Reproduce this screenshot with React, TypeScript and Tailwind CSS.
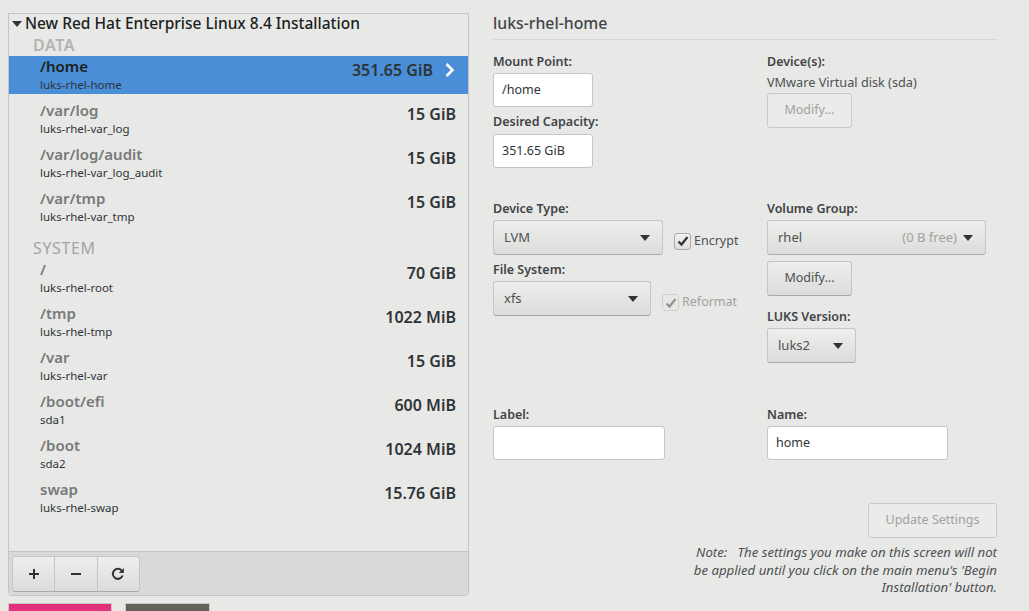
import React from 'react';

const font = "font-['Noto_Sans','Open_Sans',sans-serif]";

type Mount = { path: string; device: string; size: string; selected?: boolean };

const dataMounts: Mount[] = [
  { path: '/home', device: 'luks-rhel-home', size: '351.65 GiB', selected: true },
  { path: '/var/log', device: 'luks-rhel-var_log', size: '15 GiB' },
  { path: '/var/log/audit', device: 'luks-rhel-var_log_audit', size: '15 GiB' },
  { path: '/var/tmp', device: 'luks-rhel-var_tmp', size: '15 GiB' },
];

const systemMounts: Mount[] = [
  { path: '/', device: 'luks-rhel-root', size: '70 GiB' },
  { path: '/tmp', device: 'luks-rhel-tmp', size: '1022 MiB' },
  { path: '/var', device: 'luks-rhel-var', size: '15 GiB' },
  { path: '/boot/efi', device: 'sda1', size: '600 MiB' },
  { path: '/boot', device: 'sda2', size: '1024 MiB' },
  { path: 'swap', device: 'luks-rhel-swap', size: '15.76 GiB' },
];

const MountRow = ({ mount }: { mount: Mount }) => (
  <div className={`flex h-[38px] mb-[6px] pl-[31px] pr-[12px] justify-between ${mount.selected ? 'bg-[#4a8ed8]' : ''}`}>
    <div className="flex flex-col">
      <span className={`text-[15px] leading-[20px] font-semibold ${mount.selected ? 'text-[#1b1f20]' : 'text-[#777a78]'}`}>{mount.path}</span>
      <span className="text-[11.5px] leading-[16px] mt-[1px] text-[#2e3436]">{mount.device}</span>
    </div>
    <div className="flex items-start pt-[3px] gap-[11px]">
      <span className="text-[16px] leading-[22px] font-semibold text-[#2e3436]">{mount.size}</span>
      {mount.selected && (
        <svg width="12" height="22" viewBox="0 0 12 22" fill="none" stroke="white" strokeWidth="2.6">
          <path d="M2.5 5l6 6-6 6" />
        </svg>
      )}
    </div>
  </div>
);

const Caret = ({ color = '#2e3436' }: { color?: string }) => (
  <svg width="10" height="6" viewBox="0 0 10 6" fill={color} className="shrink-0">
    <path d="M0 0h10L5 6z" />
  </svg>
);

const FieldLabel = ({ children }: { children: React.ReactNode }) => (
  <div className="text-[12.5px] leading-[18px] font-semibold text-[#3f4546]">{children}</div>
);

const TextBox = ({ value, width }: { value: string; width: string }) => (
  <div className={`${width} h-[34px] bg-white border border-[#c4c6c4] rounded-[3px] flex items-center pl-[8px] text-[12.5px] text-[#2e3436]`}>{value}</div>
);

const gradientBtn = 'bg-gradient-to-b from-[#eeeeec] to-[#dcdcda] border border-[#c4c6c4] border-b-[#a9aba9] rounded-[3px]';

const Combo = ({ width, children }: { width: string; children: React.ReactNode }) => (
  <div className={`${width} h-[35px] ${gradientBtn} flex items-center pl-[10px] pr-[12px] justify-between text-[13px] text-[#4c5152] shrink-0`}>
    {children}
  </div>
);

const Check = ({ disabled }: { disabled?: boolean }) => (
  <div className={`w-[17px] h-[17px] rounded-[3px] border flex items-center justify-center shrink-0 ${disabled ? 'border-[#cfd0ce] bg-[#e8e8e7]' : 'border-[#a9aba9] bg-gradient-to-b from-[#f2f2f0] to-[#dededc]'}`}>
    <svg width="12" height="12" viewBox="0 0 12 12" fill="none" stroke={disabled ? '#8f9290' : '#2e3436'} strokeWidth="2.2">
      <path d="M1.5 6.5l3 3 6-7.5" />
    </svg>
  </div>
);

export default function App() {
  return (
    <div className={`${font} w-[1029px] h-[611px] overflow-hidden bg-[#e8e8e7] flex pl-[8px] pt-[13px]`}>
      {/* Left: mount list */}
      <div className="w-[461px] shrink-0 flex flex-col">
        <div className="h-[583px] shrink-0 border border-[#c4c6c4] rounded-b-[4px] flex flex-col">
          <div className="flex-1 flex flex-col">
            <div className="flex items-center h-[20px] pl-[3px] gap-[3px] text-[15.5px] font-medium text-[#1b1f20]">
              <Caret />
              <span>New Red Hat Enterprise Linux 8.4 Installation</span>
            </div>
            <div className="pl-[24px] h-[22px] text-[16px] leading-[22px] tracking-[0.6px] font-semibold text-[#b2b4b2]">DATA</div>
            {dataMounts.map(m => <MountRow key={m.path} mount={m} />)}
            <div className="pl-[24px] h-[19px] mt-[6px] text-[16px] leading-[20px] tracking-[0.6px] text-[#a3a5a3]">SYSTEM</div>
            <div className="mt-[2px]">
              {systemMounts.map(m => <MountRow key={m.path} mount={m} />)}
            </div>
          </div>
          <div className="h-[44px] border-t border-[#c4c6c4] bg-[#d9d9d8] rounded-b-[4px] flex items-center pl-[3px]">
            <div className={`flex h-[36px] w-[128px] ${gradientBtn} text-[#2e3436]`}>
              <div className="flex-1 flex items-center justify-center border-r border-[#c4c6c4]">
                <svg width="12" height="12" viewBox="0 0 12 12" stroke="#2e3436" strokeWidth="2"><path d="M6 1v10M1 6h10" /></svg>
              </div>
              <div className="flex-1 flex items-center justify-center border-r border-[#c4c6c4]">
                <svg width="12" height="12" viewBox="0 0 12 12" stroke="#2e3436" strokeWidth="2"><path d="M1 6h10" /></svg>
              </div>
              <div className="flex-1 flex items-center justify-center">
                <svg width="14" height="14" viewBox="0 0 14 14" fill="none" stroke="#2e3436" strokeWidth="2">
                  <path d="M11.6 8.5A5 5 0 1 1 10.5 3.4L12 5" />
                  <path d="M12.8 1v5h-5z" fill="#2e3436" stroke="none" />
                </svg>
              </div>
            </div>
          </div>
        </div>
        <div className="flex mt-[7px] gap-[13px] shrink-0">
          <div className="w-[104px] h-[20px] bg-[#e0317a] border border-[#c9c9c7]" />
          <div className="w-[85px] h-[20px] bg-[#63635b] border border-[#c9c9c7]" />
        </div>
      </div>

      {/* Right: details */}
      <div className="ml-[24px] w-[504px] flex flex-col">
        <div className="h-[27px] shrink-0 border-b border-[#d6d6d4] text-[15.8px] leading-[20px] font-medium text-[#3f4546]">luks-rhel-home</div>

        <div className="grid grid-cols-[274px_1fr] mt-[13px]">
          <div>
            <FieldLabel>Mount Point:</FieldLabel>
            <div className="mt-[2px]"><TextBox value="/home" width="w-[100px]" /></div>
            <div className="mt-[6px]"><FieldLabel>Desired Capacity:</FieldLabel></div>
            <div className="mt-[3px]"><TextBox value="351.65 GiB" width="w-[100px]" /></div>
          </div>
          <div>
            <FieldLabel>Device(s):</FieldLabel>
            <div className="text-[12.7px] leading-[18px] mt-[2px] text-[#4c5152]">VMware Virtual disk (sda)</div>
            <div className="mt-[2px] w-[85px] h-[35px] border border-[#c9cac8] rounded-[3px] bg-[#ebebea] flex items-center justify-center text-[12.5px] text-[#a0a2a0]">Modify...</div>
          </div>
        </div>

        <div className="grid grid-cols-[274px_1fr] mt-[32px]">
          <div>
            <FieldLabel>Device Type:</FieldLabel>
            <div className="flex items-center mt-[2px]">
              <Combo width="w-[170px]"><span>LVM</span><Caret /></Combo>
              <div className="flex items-center ml-[11px] gap-[3px] mt-[7px] text-[12.5px] text-[#4c5152]"><Check /><span>Encrypt</span></div>
            </div>
            <div className="mt-[6px]"><FieldLabel>File System:</FieldLabel></div>
            <div className="flex items-center mt-[2px]">
              <Combo width="w-[158px]"><span>xfs</span><Caret /></Combo>
              <div className="flex items-center ml-[11px] gap-[3px] mt-[8px] text-[12.5px] text-[#a0a2a0]"><Check disabled /><span>Reformat</span></div>
            </div>
          </div>
          <div>
            <FieldLabel>Volume Group:</FieldLabel>
            <div className="mt-[2px]">
              <Combo width="w-[219px]">
                <span>rhel</span>
                <span className="flex items-center gap-[6px]"><span className="text-[#a0a2a0]">(0 B free)</span><Caret /></span>
              </Combo>
            </div>
            <div className={`mt-[6px] w-[85px] h-[35px] ${gradientBtn} flex items-center justify-center text-[12.5px] text-[#4c5152]`}>Modify...</div>
            <div className="mt-[12px]"><FieldLabel>LUKS Version:</FieldLabel></div>
            <div className="mt-[2px]"><Combo width="w-[89px]"><span>luks2</span><Caret /></Combo></div>
          </div>
        </div>

        <div className="grid grid-cols-[274px_1fr] mt-[43px]">
          <div>
            <FieldLabel>Label:</FieldLabel>
            <div className="mt-[2px]"><TextBox value="" width="w-[172px]" /></div>
          </div>
          <div>
            <FieldLabel>Name:</FieldLabel>
            <div className="mt-[2px]"><TextBox value="home" width="w-[181px]" /></div>
          </div>
        </div>

        <div className="flex flex-col items-end mt-[43px]">
          <div className="w-[129px] h-[35px] shrink-0 border border-[#c9cac8] rounded-[3px] bg-[#ebebea] flex items-center justify-center text-[12.5px] text-[#a0a2a0]">Update Settings</div>
          <div className="w-[310px] mt-[6px] text-right text-[13.2px] leading-[17.5px] italic text-[#4c5152]">
            Note:&nbsp;&nbsp; The settings you make on this screen will not be applied until you click on the main menu's 'Begin Installation' button.
          </div>
        </div>
      </div>
    </div>
  );
}
